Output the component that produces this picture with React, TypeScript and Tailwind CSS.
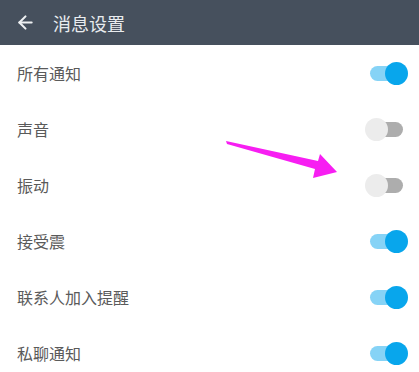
import { ArrowLeft } from 'lucide-react'

const items = [
  { label: '所有通知', on: true },
  { label: '声音', on: false },
  { label: '振动', on: false },
  { label: '接受震', on: true },
  { label: '联系人加入提醒', on: true },
  { label: '私聊通知', on: true },
]

function Toggle({ on }: { on: boolean }) {
  return (
    <div className="relative w-[43px] h-[23px] shrink-0">
      <div
        className={`absolute left-[5px] right-[5px] top-[4px] h-[15px] rounded-full ${
          on ? 'bg-[#86d3f6]' : 'bg-[#adadad]'
        }`}
      />
      <div
        className={`absolute top-0 w-[23px] h-[23px] rounded-full ${
          on ? 'right-0 bg-[#08a6ec]' : 'left-0 bg-[#ececec]'
        }`}
      />
    </div>
  )
}

export default function App() {
  return (
    <div
      className="relative w-[419px] h-[372px] overflow-hidden bg-white"
      style={{ fontFamily: '"Noto Sans CJK SC", "Noto Sans", sans-serif' }}
    >
      {/* Header */}
      <div className="h-[45px] bg-[#46505d] flex items-center pl-[15px] gap-[17px]">
        <ArrowLeft className="w-[21px] h-[21px] text-[#eef0f2]" strokeWidth={2.4} />
        <span className="text-[18px] text-[#e9ecef] leading-none">消息设置</span>
      </div>

      {/* Rows */}
      <div className="flex flex-col">
        {items.map((item) => (
          <div key={item.label} className="h-[56px] flex items-center justify-between pl-[17px] pr-[11px]">
            <span className="text-[16px] text-[#5a5a5a] leading-none">{item.label}</span>
            <Toggle on={item.on} />
          </div>
        ))}
      </div>

      {/* Annotation arrow */}
      <svg className="absolute left-0 top-0 pointer-events-none" width="419" height="372">
        <polygon
          points="226,141 318,161 320,154 337,172 313,178 315,169 227,144"
          fill="#f71ef2"
        />
      </svg>
    </div>
  )
}
